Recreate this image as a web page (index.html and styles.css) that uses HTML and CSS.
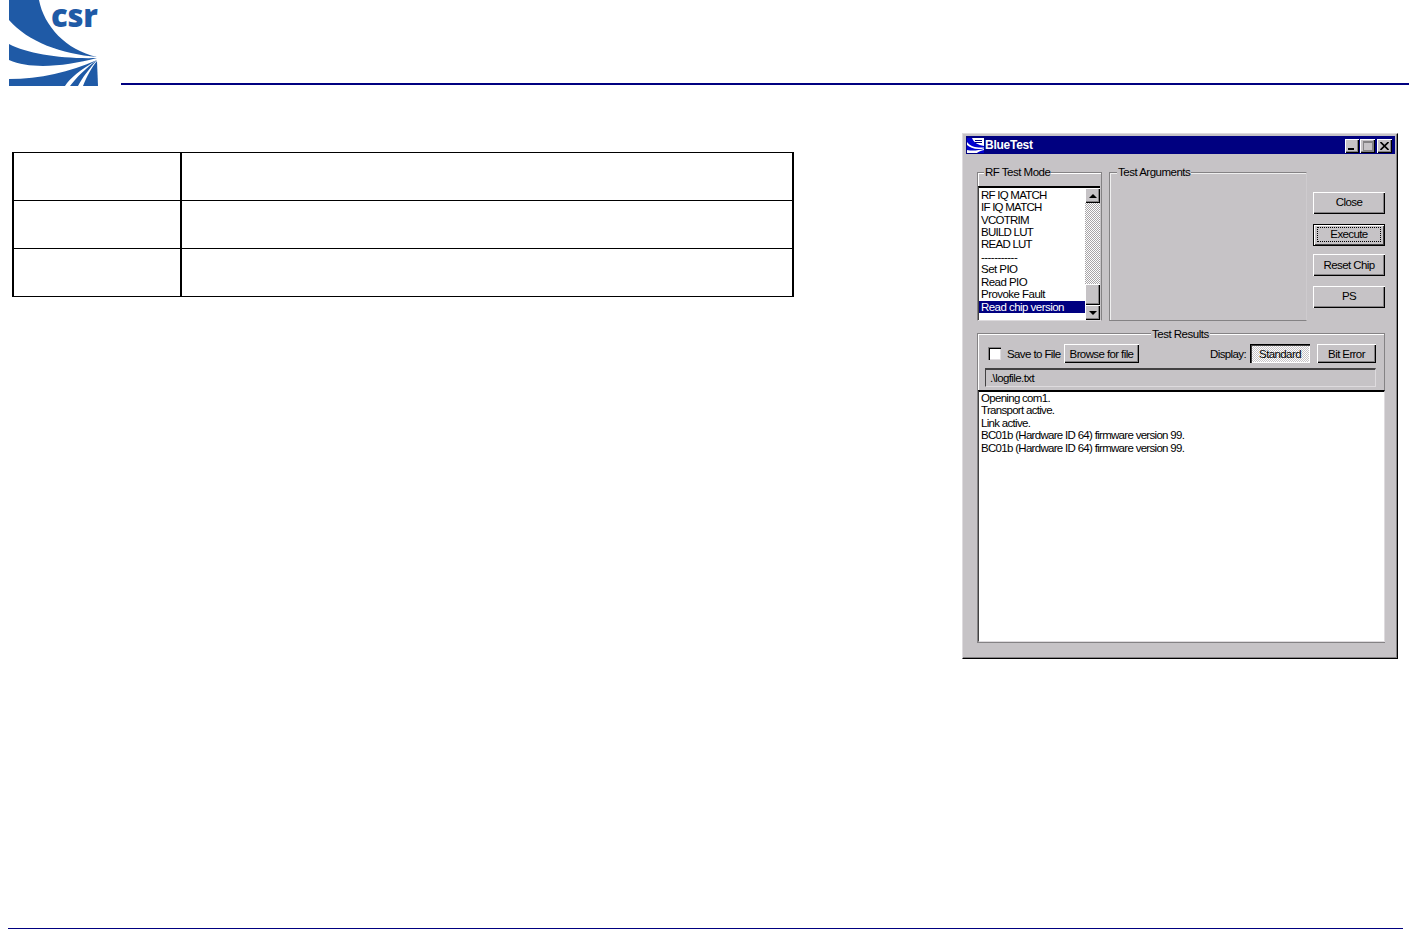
FILE: index.html
```html
<!DOCTYPE html>
<html lang="en">
<head>
<meta charset="utf-8">
<title>BlueTest</title>
<link rel="stylesheet" href="styles.css">
</head>
<body>
<div class="page">
  <header class="header">
    <div class="logo-wrap">
      <svg class="logo" viewBox="9 0 89 86" width="89" height="86" aria-hidden="true">
        <path class="logo-blue" d="M9 0H39C44 26 66 50 97 57C62 54 28 42 9 20Z"/>
        <path class="logo-blue" d="M9 44C28 54 62 59 97 58C66 66 32 70 9 60Z"/>
        <path class="logo-blue" d="M9 79C40 79 70 72 97 60C80 70 70 78 65 86H9Z"/>
        <path class="logo-blue" d="M70 86C76 78 86 68 97 60C90 68 82 78 78 86Z"/>
        <path class="logo-blue" d="M83 86C86 78 91 68 97 61L98 86Z"/>
      </svg>
      <span class="logo-text">csr</span>
    </div>
    <div class="header-line"></div>
  </header>
  <main class="content">
    <table class="spec-table">
      <tr><td class="col-a"></td><td class="col-b"></td></tr>
      <tr><td class="col-a"></td><td class="col-b"></td></tr>
      <tr><td class="col-a"></td><td class="col-b"></td></tr>
    </table>
    <section class="window">
      <div class="titlebar">
        <svg class="app-icon" viewBox="0 0 17 15" width="17" height="15" aria-hidden="true">
          <rect width="17" height="15" fill="#0000d0"/>
          <path d="M5 0H17V8C11 7 7 5 5 0Z" fill="#fff"/>
          <path d="M0 4C4 9 10 10 17 9.500V10.500C9 12 3 10 0 7Z" fill="#fff"/>
          <path d="M0 12C6 13 11 12.500 17 11V12C13 13 11 14 10 15H0Z" fill="#fff"/>
          <path d="M8 2H15V3H8ZM8 4H15V5H8Z" fill="#000080"/>
        </svg>
        <span class="title-text">BlueTest</span>
        <div class="title-buttons">
          <span class="caption-btn"><i class="glyph-min"></i></span>
          <span class="caption-btn caption-disabled"><i class="glyph-max"></i></span>
          <span class="caption-btn caption-close">
            <svg viewBox="0 0 9 8" width="9" height="8" aria-hidden="true"><path d="M0.500 0L8.500 8M8.500 0L0.500 8" stroke="#000" stroke-width="1.600" fill="none"/></svg>
          </span>
        </div>
      </div>
      <div class="dialog">
        <div class="upper">
          <div class="group group-mode">
            <span class="legend legend-mode">RF Test Mode</span>
            <div class="listbox">
              <ul class="items">
                <li class="caps">RF IQ MATCH</li>
                <li class="caps">IF IQ MATCH</li>
                <li class="caps">VCOTRIM</li>
                <li class="caps">BUILD LUT</li>
                <li class="caps">READ LUT</li>
                <li>-----------</li>
                <li>Set PIO</li>
                <li>Read PIO</li>
                <li>Provoke Fault</li>
                <li class="selected">Read chip version</li>
              </ul>
              <div class="scrollbar">
                <span class="sb-btn"><i class="arrow-up"></i></span>
                <span class="sb-track"></span>
                <span class="sb-thumb"></span>
                <span class="sb-btn"><i class="arrow-down"></i></span>
              </div>
            </div>
          </div>
          <div class="group group-args">
            <span class="legend legend-args">Test Arguments</span>
          </div>
          <div class="actions">
            <button class="btn btn-action btn-raised">Close</button>
            <button class="btn btn-action btn-default"><span class="focus">Execute</span></button>
            <button class="btn btn-action">Reset Chip</button>
            <button class="btn btn-action btn-raised">PS</button>
          </div>
        </div>
        <div class="group group-results">
          <span class="legend legend-results">Test Results</span>
          <div class="results-row">
            <span class="checkbox"></span>
            <span class="save-label">Save to File</span>
            <button class="btn btn-browse">Browse for file</button>
            <span class="display-label">Display:</span>
            <button class="btn btn-standard">Standard</button>
            <button class="btn btn-bit">Bit Error</button>
          </div>
          <div class="file-field">.\logfile.txt</div>
          <div class="output">
            <div>Opening com1.</div>
            <div>Transport active.</div>
            <div>Link active.</div>
            <div>BC01b (Hardware ID 64) firmware version 99.</div>
            <div>BC01b (Hardware ID 64) firmware version 99.</div>
          </div>
        </div>
      </div>
    </section>
  </main>
  <footer class="footer-line"></footer>
</div>
</body>
</html>
```
FILE: styles.css
```css
* { box-sizing: border-box; }
html, body { margin: 0; padding: 0; background: #fff; }
body { font-family: "Liberation Sans", Arial, sans-serif; color: #000; }
.page { width: 1410px; height: 929px; display: flex; flex-direction: column; overflow: hidden; }

.header { height: 86px; display: flex; align-items: flex-end; padding-left: 9px; flex: none; }
.logo-wrap { position: relative; width: 89px; height: 86px; flex: none; }
.logo { display: block; }
.logo-blue { fill: #1f5aa6; }
.logo-text { position: absolute; left: 42px; top: 6px; line-height: 18px; font-family: "Open Sans", sans-serif; font-weight: 800; font-size: 31px; color: #1f5aa6; letter-spacing: -0.2px; }
.header-line { width: 1288px; height: 2px; background: #000080; margin: 0 0 1px 23px; flex: none; }

.content { flex: 1; display: flex; align-items: flex-start; padding: 47px 0 0 12px; }
.footer-line { height: 1px; background: #000080; margin: 0 7px 0 8px; flex: none; }

.spec-table { border-collapse: separate; border-spacing: 0; width: 782px; margin-top: 19px; flex: none; border-top: 1px solid #000; border-right: 2px solid #000; border-left: 2px solid #000; table-layout: fixed; }
.spec-table td { height: 48px; padding: 0; border-bottom: 1px solid #000; }
.spec-table .col-a { width: 168px; border-right: 2px solid #000; }

.window { width: 436px; height: 526px; margin-left: 168px; flex: none; background: #c6c3c6; border: 1px solid #000; border-top-color: #dedbde; border-left-color: #dedbde; padding: 2px 2px 0 3px; font-size: 11.5px; letter-spacing: -0.6px; box-shadow: inset -1px -1px 0 #848284; }
.titlebar { height: 18px; background: #000080; color: #fff; display: flex; align-items: center; padding: 0 3px 0 1px; }
.app-icon { flex: none; }
.title-text { font-weight: 700; font-size: 12px; letter-spacing: -0.25px; margin-left: 1px; }
.title-buttons { margin: 2px 0 0 auto; display: flex; }
.caption-btn { width: 14px; height: 14px; background: #c6c3c6; box-shadow: inset 1px 1px 0 #fff, inset -1px -1px 0 #000, inset -2px -2px 0 #848284; display: flex; align-items: center; justify-content: center; }
.caption-disabled { margin: 0 2px 0 1px; width: 15px; }
.caption-close { width: 15px; }
.glyph-min { width: 6px; height: 2px; background: #000; margin-top: 6px; margin-right: 2px; }
.glyph-max { width: 10px; height: 10px; border: 1px solid #848284; border-top-width: 2px; }

.dialog { padding: 18px 10px 0 11px; }
.upper { display: flex; gap: 7px; height: 149px; }
.group { position: relative; border: 1px solid #848284; box-shadow: inset 1px 1px 0 #fff; flex: none; }
.legend { position: absolute; top: -7px; height: 13px; line-height: 13px; background: #c6c3c6; padding: 0 1px; color: #000; }
.legend-mode { left: 6px; letter-spacing: -0.5px; }
.legend-args { left: 7px; letter-spacing: -0.5px; }
.group-mode { width: 125px; padding: 13px 1px 0 0; border-bottom-color: #dedbde; }
.group-args { width: 198px; border-right-color: #cecbce; box-shadow: inset 1px 1px 0 #efefef; }

.listbox { height: 134px; display: flex; background: #fff; border-top: 2px solid #000; border-left: 1px solid #424142; }
.items { list-style: none; margin: 0; padding: 0.7px 0 0; flex: 1; min-width: 0; }
.items li { height: 12.44px; line-height: 12.44px; padding-left: 2px; white-space: nowrap; letter-spacing: -0.54px; }
.items .caps { letter-spacing: -0.75px; }
.items .selected { background: #000080; color: #fff; }
.scrollbar { width: 15px; flex: none; display: flex; flex-direction: column; }
.sb-btn { height: 15px; flex: none; background: #c6c3c6; box-shadow: inset 1px 1px 0 #fff, inset -1px -1px 0 #000, inset -2px -2px 0 #848284; display: flex; align-items: center; justify-content: center; }
.sb-track { flex: 1; background: repeating-conic-gradient(#fff 0 25%, #a8a5a8 0 50%) 0 0 / 2px 2px; }
.sb-thumb { height: 21px; flex: none; background: #c6c3c6; box-shadow: inset 1px 1px 0 #fff, inset -1px -1px 0 #000, inset -2px -2px 0 #848284; }
.arrow-up { width: 0; height: 0; border: 4px solid transparent; border-top: 0; border-bottom-color: #000; }
.arrow-down { width: 0; height: 0; border: 4px solid transparent; border-bottom: 0; border-top-color: #000; }

.actions { width: 72px; margin-left: -1px; padding-top: 20px; display: flex; flex-direction: column; gap: 10px; flex: none; }
.btn { font: inherit; letter-spacing: inherit; color: #000; margin: 0; padding: 0; border: 0; background: #c6c3c6; box-shadow: inset 1px 1px 0 #fff, inset -1px -1px 0 #000, inset -2px -2px 0 #848284; text-align: center; flex: none; }
.btn-action { height: 22px; }
.btn-raised { padding-bottom: 2px; }
.btn-default { box-shadow: inset 0 0 0 1px #000, inset 2px 2px 0 #fff, inset -2px -2px 0 #424142; margin-bottom: -2px; display: flex; padding: 3px 4px 4px 4px; }
.focus { flex: 1; outline: 1px dotted #000; outline-offset: -1px; line-height: 15px; }

.group-results { width: 408px; height: 310px; margin-top: 12px; }
.legend-results { left: 173px; top: -6px; letter-spacing: -0.5px; }
.results-row { display: flex; align-items: center; height: 19px; margin-top: 10px; padding-left: 10px; }
.checkbox { width: 13px; height: 13px; background: #fff; box-shadow: inset 1px 1px 0 #848284, inset 2px 2px 0 #000, inset -1px -1px 0 #dedbde; flex: none; }
.save-label { margin-left: 6px; width: 57px; flex: none; }
.btn-browse { width: 75px; height: 19px; }
.display-label { margin-left: auto; width: 40px; flex: none; }
.btn-standard { width: 60px; height: 19px; background: repeating-conic-gradient(#fff 0 25%, #c6c3c6 0 50%) 0 0 / 2px 2px; box-shadow: inset 1px 1px 0 #000, inset 2px 2px 0 #424142, inset -1px -1px 0 #fff; }
.btn-bit { width: 59px; height: 19px; margin: 0 8px 0 7px; }
.file-field { height: 19px; margin: 5px 8px 3px 7px; line-height: 16px; padding-left: 4px; border: 1px solid #dedbde; border-top: 2px solid #424142; border-left-color: #424142; }
.output { height: 252px; background: #fff; border-top: 2px solid #000; border-left: 1px solid #424142; border-right: 1px solid #dedbde; border-bottom: 1px solid #dedbde; padding: 0 0 0 2px; line-height: 12.4px; letter-spacing: -0.7px; margin-right: -1px; }
```
